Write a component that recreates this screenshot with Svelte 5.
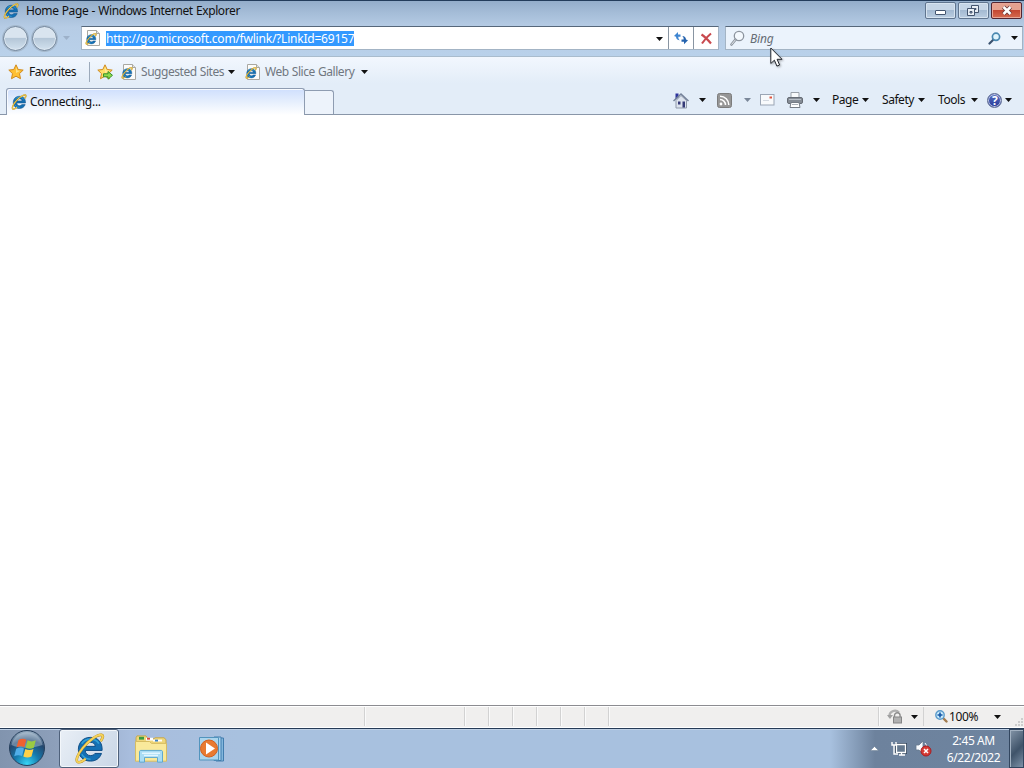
<script lang="ts">
  const url = 'http://go.microsoft.com/fwlink/?LinkId=69157';

  const favorites = [
    { label: 'Suggested Sites', width: 82 },
    { label: 'Web Slice Gallery', width: 91 },
  ];

  const menus = [
    { label: 'Page', width: 26 },
    { label: 'Safety', width: 32 },
    { label: 'Tools', width: 29 },
  ];

  const panes = [100, 24, 24, 24, 24, 24, 24];
</script>

{#snippet ie(size: number)}
  <svg width={size} height={size} viewBox="0 0 32 32">
    <path d="M29 18H11.500c.3 3.500 2.500 5.300 5.600 5.300 2.200 0 3.600-.8 4.500-2.200h6.800C26.500 26.300 22.500 29 17 29 9 29 4.500 23.700 4.500 17S9.200 4.500 17 4.500c7.900 0 12.500 5.200 12 13.500zM22 13.800c-.4-2.700-2.300-4.200-5-4.200s-4.800 1.500-5.300 4.200z" fill="#1470b4" stroke="#0d4c84" stroke-width="1" fill-rule="evenodd" />
    <path d="M8 11c2-3 5-4.600 9-4.600s7 1.600 8.700 4.600" fill="none" stroke="#2f9fd6" stroke-width="1.800" />
    <path d="M8 22c2 3 5 5 9 5" fill="none" stroke="#35a3d8" stroke-width="1.500" />
    <path d="M27.500 8.500C30 5 30.500 2.500 28.500 2 24.500 1 15 8 9 15.500S1.500 29 4 30c2 .7 5-1 8-3.500" fill="none" stroke="#b88b18" stroke-width="2.800" />
    <path d="M27.500 8.500C30 5 30.500 2.500 28.500 2 24.500 1 15 8 9 15.500S1.500 29 4 30c2 .7 5-1 8-3.500" fill="none" stroke="#f4d25c" stroke-width="2" />
  </svg>
{/snippet}

{#snippet iePage()}
  <span class="ie-page">
    <svg width="16" height="16" viewBox="0 0 16 16">
      <path d="M2.500.5h9l3 3v12h-12z" fill="#fcfcfa" stroke="#a9a8a2" />
      <path d="M11.500.5v3h3" fill="#e4e4e0" stroke="#a9a8a2" />
    </svg>
    <span class="ie-mark">{@render ie(12)}</span>
  </span>
{/snippet}

{#snippet star(plus: boolean)}
  <svg width="16" height="16" viewBox="0 0 16 16">
    <path d="M8 .8l2.200 4.700 5 .6-3.700 3.500 1 5.100L8 12.200l-4.500 2.500 1-5.100L.8 6.100l5-.6z" fill={plus ? '#ffdf6a' : '#ffc033'} stroke="#d08a1e" stroke-linejoin="round" />
    <path d="M8 2.800l1.300 3.600 3 .4L8 9z" fill="#fff0a8" opacity=".7" />
    {#if plus}
      <path d="M6.500 9.800h4.500V7.500l4.500 3.800-4.500 3.900v-2.400H6.500z" fill="#8edb4a" stroke="#36912a" />
    {/if}
  </svg>
{/snippet}

{#snippet arrow()}
  <svg class="arrow" width="7" height="4" viewBox="0 0 7 4"><path d="M0 0h7L3.500 4z" fill="currentColor" /></svg>
{/snippet}

<div class="screen">
  <header class="frame">
    <div class="titlebar">
      {@render ie(16)}
      <span class="title">Home Page - Windows Internet Explorer</span>
      <div class="window-buttons">
        <button aria-label="Minimize">
          <svg width="12" height="10" viewBox="0 0 12 10"><rect x=".5" y="4.500" width="10" height="4" rx=".5" fill="#fff" stroke="#44556f" /></svg>
        </button>
        <button aria-label="Restore">
          <svg width="13" height="12" viewBox="0 0 13 12">
            <path d="M4.500.5h7v7h-7z" fill="#e8eef5" stroke="#44556f" /><path d="M7.500 3.500h1.500v1H7.500z" fill="#a9bed6" stroke="#44556f" />
            <path d="M.5 3.500h7v7h-7z" fill="#e8eef5" stroke="#44556f" /><path d="M3 6.500h2v1.500H3z" fill="#a9bed6" stroke="#44556f" />
          </svg>
        </button>
        <button class="close" aria-label="Close">
          <svg width="12" height="11" viewBox="0 0 12 11"><path d="M2.500 2l7 7M9.500 2l-7 7" stroke="#6b3838" stroke-width="4.200" /><path d="M2.500 2l7 7M9.500 2l-7 7" stroke="#fff" stroke-width="2.500" /></svg>
        </button>
      </div>
    </div>

    <div class="navbar">
      <div class="travel">
        <span class="orb"></span>
        <span class="orb"></span>
        <span class="history">{@render arrow()}</span>
      </div>
      <div class="address">
        {@render iePage()}
        <span class="url">{url}</span>
        <span class="drop">{@render arrow()}</span>
        <span class="action">
          <svg width="16" height="16" viewBox="0 0 16 16">
            <path d="M1 6l4-4v2.500h2.500v2.200H5.300c0 2 .5 2.800 1.700 3.600C4.200 10 3.200 9 3 6.700z" fill="#3f86d2" />
            <path d="M15 10.200l-4 4.100v-2.600H8.500V9.500h2.200c0-2-.5-2.800-1.700-3.600 2.800.3 3.800 1.300 4 3.600z" fill="#2563ae" />
          </svg>
        </span>
        <span class="action">
          <svg width="13" height="13" viewBox="0 0 13 13"><path d="M1.500 2.500Q5.500 5 11 11.500M11 1.500Q6 5.500 2 11.500" fill="none" stroke="#c8494e" stroke-width="2.100" /></svg>
        </span>
      </div>
      <div class="search">
        <svg width="16" height="17" viewBox="0 0 16 17">
          <circle cx="9" cy="6" r="4.700" fill="#f4f9fe" stroke="#8c949e" stroke-width="1.300" />
          <path d="M5.500 9.700L1.500 14.500" stroke="#8c949e" stroke-width="2.600" stroke-linecap="round" /><path d="M5.500 9.700L1.500 14.500" stroke="#e5e9ee" />
        </svg>
        <span class="engine">Bing</span>
        <svg width="13" height="13" viewBox="0 0 13 13">
          <path d="M5.500 7.500L1.500 11.500" stroke="#39516e" stroke-width="2.200" stroke-linecap="round" />
          <circle cx="8" cy="4.800" r="3.600" fill="#e0f4fc" stroke="#4a88b0" stroke-width="1.700" />
        </svg>
        {@render arrow()}
      </div>
    </div>
  </header>

  <div class="toolbar">
    <div class="favorites">
      {@render star(false)}
      <span class="fav-label">Favorites</span>
      <span class="divider"></span>
      {@render star(true)}
      {#each favorites as item}
        <span class="fav">
          {@render iePage()}
          <span class="fav-text" style:width="{item.width}px">{item.label}</span>
          {@render arrow()}
        </span>
      {/each}
    </div>

    <div class="tabs">
      <div class="tab">
        {@render ie(16)}
        <span class="tab-title">Connecting...</span>
      </div>
      <div class="new-tab"></div>
      <div class="commands">
        <svg width="16" height="17" viewBox="0 0 16 17">
          <path d="M2.500 1.500h3v4l-3 2z" fill="#2c339c" />
          <path d="M3 8.500L8 3.500l5.500 5v7.500H3z" fill="#dce3ee" stroke="#8f99aa" />
          <path d="M.5 9L8 2l7.500 7" fill="none" stroke="#75829a" stroke-width="1.500" />
          <path d="M5 9.500h2.500v3H5zM9.500 9.500H12v6H9.500z" fill="#353b78" />
        </svg>
        <span class="gap-home">{@render arrow()}</span>
        <svg class="rss" width="15" height="15" viewBox="0 0 15 15">
          <rect x=".5" y=".5" width="14" height="14" rx="2" fill="#969696" stroke="#7c7c7c" />
          <circle cx="4" cy="11" r="1.400" fill="#fff" />
          <path d="M3 6.500c3 0 5.500 2.500 5.500 5.500M3 3.200c5 0 8.800 3.800 8.800 8.800" fill="none" stroke="#fff" stroke-width="1.500" />
        </svg>
        <span class="dim">{@render arrow()}</span>
        <svg class="mail" width="15" height="12" viewBox="0 0 15 12">
          <rect x=".5" y=".5" width="13.500" height="10.500" fill="#f8fafc" stroke="#9ba6b5" />
          <path d="M9.500 2.500H12v2H9.500z" fill="#e0543f" /><path d="M3 6.500h6" stroke="#d3d9e1" />
        </svg>
        <svg class="printer" width="16" height="16" viewBox="0 0 16 16">
          <path d="M4 .5h8V6H4z" fill="#f8fafb" stroke="#9aa1a9" />
          <rect x=".5" y="5.500" width="15" height="6" rx="1.500" fill="#858c95" stroke="#666c75" />
          <path d="M2 7.500h12" stroke="#b9c0c8" /><path d="M4 10.500h8l1 5H3z" fill="#fff" stroke="#767d86" /><path d="M5 12.500h6" stroke="#aab0b7" />
        </svg>
        <span class="gap-print">{@render arrow()}</span>
        {#each menus as menu}
          <span class="menu">
            <span class="menu-label" style:width="{menu.width}px">{menu.label}</span>
            {@render arrow()}
          </span>
        {/each}
        <span class="help">?</span>
        {@render arrow()}
      </div>
    </div>
  </div>

  <main></main>

  <footer class="statusbar">
    <span class="status-text"></span>
    {#each panes as width}
      <span class="pane" style:width="{width}px"></span>
    {/each}
    <span class="zone"></span>
    <span class="privacy">
      <svg width="17" height="16" viewBox="0 0 17 16">
        <path d="M2.500 8A5.500 5.500 0 0 1 12 3.500" fill="none" stroke="#b0b0b0" stroke-width="2.200" /><path d="M0 6h6L3 10z" fill="#a0a0a0" />
        <path d="M7.500 8V6.500a2.800 2.800 0 0 1 5.600 0V8" fill="none" stroke="#8c8c8c" stroke-width="1.400" /><rect x="6.500" y="8" width="8" height="6" fill="#b0b0b0" stroke="#858585" />
      </svg>
      {@render arrow()}
    </span>
    <span class="zoom">
      <svg width="13" height="13" viewBox="0 0 13 13">
        <path d="M8 8l3.500 3.500" stroke="#a27b4e" stroke-width="2.400" stroke-linecap="round" /><circle cx="5" cy="5" r="4.200" fill="#c8eafb" stroke="#5a9aca" stroke-width="1.400" />
        <path d="M5 2.500v5M2.500 5h5" stroke="#1557a6" stroke-width="1.600" />
      </svg>
      <span class="percent">100%</span>
      {@render arrow()}
    </span>
    <svg class="grip" width="10" height="10" viewBox="0 0 10 10"><path d="M7 1h2v2H7zM4 4h2v2H4zM7 4h2v2H7zM1 7h2v2H1zM4 7h2v2H4zM7 7h2v2H7z" fill="#cdcdcd" /></svg>
  </footer>

  <nav class="taskbar">
    <span class="start">
      <svg width="38" height="38" viewBox="0 0 38 38">
        <defs>
          <radialGradient id="orb" cx=".5" cy=".95" r=".9"><stop offset="0" stop-color="#36d5f5" /><stop offset=".4" stop-color="#1579ac" /><stop offset=".75" stop-color="#25476e" /><stop offset="1" stop-color="#8ea5bb" /></radialGradient>
        </defs>
        <circle cx="19" cy="19" r="17.500" fill="url(#orb)" stroke="#263f5c" />
        <path d="M3.500 16a15.800 15.800 0 0 1 31 0C27 19 11 20 3.500 16z" fill="#d8e5ef" opacity=".38" />
        <path d="M10.500 11c3-1.800 5.500-1.500 7.800-.2l-2 7.500c-2.400-1.300-5-1.400-7.800.1z" fill="#ef6130" />
        <path d="M19.600 11.300c2.700 1.500 5.200 1.500 8.200 0l-2 7.500c-2.800 1.400-5.500 1.200-8.200-.1z" fill="#9acb42" />
        <path d="M8.200 19.700c2.800-1.500 5.400-1.400 7.800-.1l-2 7.500c-2.400-1.300-5-1.300-7.800.1z" fill="#51aee8" />
        <path d="M17.300 20c2.700 1.400 5.300 1.500 8.200.1l-2 7.500c-2.900 1.400-5.500 1.300-8.200-.1z" fill="#ffd147" />
      </svg>
    </span>
    <span class="task active">{@render ie(31)}</span>
    <span class="task explorer">
      <svg width="34" height="30" viewBox="0 0 34 32" preserveAspectRatio="none">
        <path d="M2 4l1-2h9l2 3h6l1-1h9l2 2v22H2z" fill="#efd77a" stroke="#c6a74d" />
        <path d="M5 3h5v3H5z" fill="#3a9c42" /><path d="M12 4h7v3h-7z" fill="#fff" /><path d="M13 4h3v2h-3z" fill="#df4939" /><path d="M19 6h9v2h-9z" fill="#fff" /><path d="M21 6h3v2h-3z" fill="#3b83c5" />
        <path d="M1.500 8h14l2 2h15v19h-31z" fill="#f9e99b" stroke="#d6bb60" />
        <path d="M5.500 30V19c0-1 .5-1.500 1.500-1.500h20c1 0 1.500.5 1.500 1.500v11h-5v-5h-13v5z" fill="#a9dcf4" stroke="#5ca7ce" />
        <path d="M8 20.500h18M10 23h14" stroke="#e2f6ff" stroke-width="1.500" />
      </svg>
    </span>
    <span class="task media">
      <svg width="28" height="28" viewBox="0 0 28 28">
        <path d="M18 3h7.500v23H18z" fill="#83b7dc" stroke="#427dae" /><path d="M16 2h7v23.500h-7z" fill="#a9d4ee" stroke="#427dae" />
        <path d="M1.500 2.500h19v22.500h-19z" fill="#abd5ed" stroke="#5294bd" />
        <circle cx="11" cy="13.500" r="8.500" fill="#e87a30" stroke="#d2601f" /><path d="M8 7.500v12l9-6z" fill="#fff" />
      </svg>
    </span>
    <div class="tray">
      <svg class="show-hidden" width="9" height="5" viewBox="0 0 9 5"><path d="M4.500.5l4 4h-8z" fill="#fff" stroke="#65788e" stroke-width=".5" /></svg>
      <svg width="16" height="16" viewBox="0 0 16 16">
        <path d="M5.500 3.500h9v8h-9z" fill="#65798f" stroke="#33465c" stroke-width="3" /><path d="M5.500 3.500h9v8h-9zM8 14h6M10.500 12v2" fill="#65798f" stroke="#fff" stroke-width="1.300" />
        <path d="M1 1v3h4V1M3 4v9h4" fill="none" stroke="#fff" stroke-width="1.400" />
      </svg>
      <svg class="volume" width="17" height="17" viewBox="0 0 17 17">
        <path d="M1 5h3l4-4v13l-4-4H1z" fill="#f8fbff" stroke="#66788d" stroke-width=".8" /><path d="M10 3q2 2 2 5" fill="none" stroke="#fff" />
        <circle cx="11" cy="11" r="5" fill="#d63b35" stroke="#a81c20" /><path d="M9 9l4 4M13 9l-4 4" stroke="#fff" stroke-width="1.500" />
      </svg>
      <div class="clock"><span>2:45 AM</span><span>6/22/2022</span></div>
      <span class="show-desktop"></span>
    </div>
  </nav>

  <svg class="cursor" width="14" height="21" viewBox="0 0 14 21"><path d="M.8 1v15.500l3.600-3.300 2.500 5.900 2.700-1.100-2.500-5.700h4.900z" fill="#fff" stroke="#20242b" /></svg>
</div>

<style>
  :global(body) {
    margin: 0;
    overflow: hidden;
  }

  .screen {
    position: relative;
    display: flex;
    flex-direction: column;
    width: 1024px;
    height: 768px;
    background: #fff;
    color: #111;
    font: 12px/16px 'Noto Sans', 'Open Sans', sans-serif;
    letter-spacing: -0.55px;
    white-space: nowrap;
    cursor: default;
  }

  svg {
    display: block;
    flex: none;
  }

  .frame {
    box-sizing: border-box;
    height: 57px;
    background: linear-gradient(#93adca, #a5bdd8 12px, #b6cce5 26px, #b9d1ea);
    border-top: 1px solid #233c5b;
    border-bottom: 1px solid #a9bccd;
  }

  .titlebar {
    display: flex;
    align-items: center;
    height: 20px;
    padding: 0 0 1px 3px;
  }

  .title {
    margin-left: 7px;
    letter-spacing: -0.4px;
    word-spacing: 0.5px;
  }

  .window-buttons {
    display: flex;
    align-self: flex-start;
    gap: 2px;
    margin: 1px 2px 0 auto;
  }

  .window-buttons button {
    display: flex;
    align-items: center;
    justify-content: center;
    box-sizing: border-box;
    width: 31px;
    height: 17px;
    padding: 0;
    border: 1px solid #60758f;
    border-radius: 2px;
    background: linear-gradient(#c5d5e6 45%, #a4bad2 50%, #bbcde1);
    box-shadow: inset 0 0 0 1px #d6e3f0;
  }

  .window-buttons .close {
    border-color: #532530;
    background: linear-gradient(#e5a18f 45%, #c44732 50%, #d66b50);
    box-shadow: inset 0 0 0 1px #e7a697;
  }

  .navbar {
    display: flex;
    align-items: center;
    height: 32px;
    padding: 0 1px 0 3px;
  }

  .travel {
    display: flex;
    align-items: center;
    width: 78px;
    gap: 4px;
  }

  .orb {
    box-sizing: border-box;
    width: 25px;
    height: 25px;
    border: 1px solid #74869a;
    border-radius: 50%;
    background: linear-gradient(#d9e4ef 45%, #b5c7d8 50%, #d3e2ef);
    box-shadow: inset 0 0 0 1px #dce7f1, 0 0 0 1px #a5b8cc;
  }

  .history {
    margin-left: 2px;
    color: #9db1c9;
  }

  .address,
  .search {
    display: flex;
    align-items: center;
    box-sizing: border-box;
    height: 24px;
    border: 1px solid #a3b4c5;
    border-top-color: #56677a;
    background: #fff;
  }

  .address {
    width: 638px;
    padding-left: 3px;
  }

  .ie-page {
    position: relative;
    display: block;
    flex: none;
  }

  .ie-mark {
    position: absolute;
    top: 3px;
    left: 0;
  }

  .url {
    width: 248px;
    height: 15px;
    margin: 1px 0 0 5px;
    line-height: 16px;
    letter-spacing: -0.22px;
    background: #3399ff;
    color: #fff;
  }

  .drop {
    margin: 1px 5px 0 auto;
  }

  .action {
    display: flex;
    align-items: center;
    justify-content: center;
    width: 24px;
    height: 22px;
    border-left: 1px solid #8995a2;
  }

  .search {
    width: 298px;
    margin-left: 6px;
    padding: 0 4px;
    background: #ebf3fc;
  }

  .engine {
    flex: 1;
    margin: 1px 0 0 4px;
    color: #666d75;
    font-style: italic;
    letter-spacing: -0.2px;
  }

  .search > :global(.arrow) {
    margin-left: 10px;
  }

  .toolbar {
    height: 58px;
    background: linear-gradient(#f2f7fe, #e3edf8 45%, #e3edf8);
  }

  .favorites {
    display: flex;
    align-items: center;
    height: 30px;
    padding-left: 8px;
  }

  .fav-label {
    width: 47px;
    margin-left: 5px;
    letter-spacing: -0.45px;
  }

  .divider {
    width: 1px;
    height: 20px;
    margin: 0 7px 0 13px;
    background: #9caabb;
  }

  .fav {
    display: flex;
    align-items: center;
    margin-left: 8px;
  }

  .fav + .fav {
    margin-left: 10px;
  }

  .fav-text {
    margin: 0 5px 0 4px;
    color: #707780;
    letter-spacing: -0.46px;
    word-spacing: 0.5px;
  }

  .fav :global(.arrow) {
    color: #111;
  }

  .tabs {
    display: flex;
    align-items: flex-end;
    box-sizing: border-box;
    height: 28px;
    padding-left: 6px;
    border-bottom: 1px solid #8996a8;
  }

  .tab {
    display: flex;
    align-items: center;
    box-sizing: border-box;
    width: 299px;
    height: 27px;
    margin-bottom: -1px;
    padding-left: 4px;
    gap: 3px;
    border: 1px solid #8e9cb1;
    border-bottom: 0;
    border-radius: 3px 3px 0 0;
    background: linear-gradient(#cfdffd, #e6effd 50%, #fff);
    box-shadow: inset 1px 1px #f8fbff;
  }

  .tab-title {
    letter-spacing: -0.25px;
  }

  .new-tab {
    box-sizing: border-box;
    width: 29px;
    height: 24px;
    border: 1px solid #8e9cb1;
    border-width: 1px 1px 0 0;
    border-radius: 0 3px 0 0;
    background: #edf3fb;
  }

  .commands {
    display: flex;
    align-items: center;
    align-self: flex-start;
    width: 351px;
    height: 26px;
    margin-left: auto;
  }

  .gap-home {
    margin: 0 11px 0 10px;
  }

  .dim {
    margin: 0 9px 0 12px;
    color: #7a8799;
  }

  .printer {
    margin-left: 12px;
  }

  .gap-print {
    margin: 0 12px 0 10px;
  }

  .menu {
    display: flex;
    align-items: center;
    gap: 4px;
    margin-right: 13px;
  }

  .menu-label {
    letter-spacing: -0.45px;
  }

  .menu:nth-last-child(3) {
    margin-right: 9px;
  }

  .help {
    box-sizing: border-box;
    width: 15px;
    height: 15px;
    margin-right: 3px;
    border: 1px solid #5e6b92;
    border-radius: 50%;
    background: linear-gradient(#5a70c2, #263a98);
    box-shadow: inset 0 0 0 1px #bdc7e5;
    color: #fff;
    font-weight: 700;
    line-height: 13px;
    text-align: center;
  }

  main {
    flex: 1;
    background: #fff;
  }

  .statusbar {
    display: flex;
    align-items: center;
    box-sizing: border-box;
    height: 23px;
    border-top: 1px solid #8c8c91;
    border-bottom: 1px solid #fff;
    background: #f0efee;
    box-shadow: inset 0 1px #fff;
  }

  .status-text {
    width: 364px;
  }

  .pane,
  .zone,
  .privacy {
    box-sizing: border-box;
    height: 19px;
    border-left: 1px solid #d2d2d2;
    box-shadow: inset 1px 0 #fafafa;
  }

  .zone {
    width: 270px;
  }

  .privacy,
  .zoom {
    display: flex;
    align-items: center;
  }

  .privacy {
    width: 45px;
    padding-left: 8px;
    gap: 7px;
  }

  .zoom {
    height: 19px;
    padding-left: 11px;
    border-left: 1px solid #d2d2d2;
  }

  .percent {
    width: 30px;
    margin: 0 15px 0 1px;
    letter-spacing: -0.35px;
  }

  .grip {
    align-self: flex-end;
    margin-left: auto;
  }

  .taskbar {
    display: flex;
    box-sizing: border-box;
    height: 40px;
    border-top: 1px solid #263b56;
    background: linear-gradient(90deg, #8194ae, #8d9fba 55px, #a8bddd 130px, #a8c1df 240px, #a8c1df 830px, #6d829d 875px, #6e849f);
    box-shadow: inset 0 1px #bed0e5;
  }

  .start {
    width: 59px;
    padding: 0 0 0 8px;
    box-sizing: border-box;
  }

  .task {
    display: flex;
    align-items: center;
    justify-content: center;
    box-sizing: border-box;
    width: 60px;
    height: 39px;
  }

  .task.active {
    border: 1px solid #4f617b;
    border-radius: 3px;
    background: linear-gradient(120deg, #e9eff6, #c9d6e6);
    box-shadow: inset 0 0 0 1px #f3f7fb;
  }

  .explorer {
    width: 64px;
    padding-top: 1px;
  }

  .media {
    width: 58px;
    padding-top: 1px;
  }

  .tray {
    display: flex;
    align-items: center;
    width: 154px;
    height: 39px;
    margin-left: auto;
  }

  .show-hidden {
    margin-right: 12px;
  }

  .volume {
    margin-left: 8px;
  }

  .clock {
    display: flex;
    flex: 1;
    flex-direction: column;
    align-items: center;
    padding: 1px 0 0 6px;
    color: #fff;
    line-height: 17px;
    letter-spacing: -0.4px;
  }

  .show-desktop {
    box-sizing: border-box;
    flex: none;
    width: 15px;
    height: 39px;
    border: 1px solid #32465f;
    background: linear-gradient(135deg, #8495a8, #3f5369 55%, #7d91a7);
    box-shadow: inset 1px 1px #a2b1c1;
  }

  .cursor {
    position: absolute;
    top: 47px;
    left: 770px;
    filter: drop-shadow(1px 1px 1px #0005);
  }
</style>
